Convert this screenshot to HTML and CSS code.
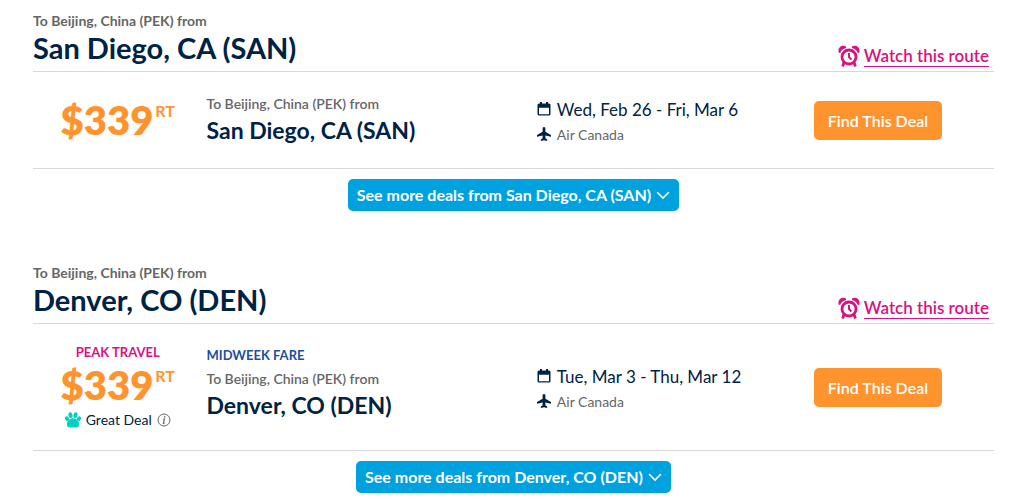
FILE: index.html
```html
<!DOCTYPE html>
<html lang="en">
<head>
    <meta charset="UTF-8">
    <meta name="viewport" content="width=device-width, initial-scale=1.0">
    <title>Deals to Beijing, China (PEK)</title>
    <link rel="stylesheet" href="styles.css">
</head>
<body>
    <!-- Shared icons -->
    <svg class="sprite" aria-hidden="true">
        <symbol id="icon-alarm" viewBox="0 0 22 22">
            <circle cx="11" cy="12" r="7" fill="none" stroke="currentColor" stroke-width="2.8"/>
            <path d="M11 8v4l2.400 2.600" fill="none" stroke="currentColor" stroke-width="2"/>
            <path d="M.8 7.800C-.8 3.200 3.200-.6 8 1.400L8.200 3C5 3.700 3 5.300 2.200 8zM21.200 7.800C22.800 3.200 18.800-.6 14 1.400L13.800 3C17 3.700 19 5.300 19.800 8z" fill="currentColor"/>
            <path d="M6 17.500L4.600 21.500M16 17.500l1.400 4" stroke="currentColor" stroke-width="2.800"/>
        </symbol>
        <symbol id="icon-calendar" viewBox="0 0 14 14">
            <path d="M2 1.500h1V0h2v1.500h4V0h2v1.500h1a1.500 1.500 0 0 1 1.500 1.500v9a1.500 1.500 0 0 1-1.500 1.500H2A1.500 1.500 0 0 1 .5 12V3A1.500 1.500 0 0 1 2 1.500zM2 5.800V12.200h10V5.800z" fill="currentColor" fill-rule="evenodd"/>
        </symbol>
        <symbol id="icon-plane" viewBox="0 0 14 14">
            <path d="M7 0c.9 0 1.400.8 1.400 1.700v3L14 8v1.800L8.400 8.400v2.800L10.200 12.600V14L7 13.200 3.800 14v-1.400l1.800-1.400V8.400L0 9.800V8l5.600-3.300v-3C5.600.8 6.100 0 7 0z" fill="currentColor"/>
        </symbol>
        <symbol id="icon-paw" viewBox="0 0 16 16">
            <g fill="currentColor">
                <ellipse cx="5.500" cy="3.200" rx="2.100" ry="2.900" transform="rotate(-8 5.500 3.200)"/>
                <ellipse cx="10.500" cy="3.200" rx="2.100" ry="2.900" transform="rotate(8 10.500 3.200)"/>
                <ellipse cx="2" cy="6.600" rx="1.900" ry="2.400" transform="rotate(-25 2 6.600)"/>
                <ellipse cx="14" cy="6.600" rx="1.900" ry="2.400" transform="rotate(25 14 6.600)"/>
                <path d="M8 6.200c2.800 0 4.100 1.700 5.200 3 1.500 1.700 1.400 6.100-2 6.400-1.200.1-1.900-.4-3.200-.4s-2 .5-3.200.4c-3.400-.3-3.500-4.700-2-6.400 1.100-1.300 2.400-3 5.200-3z"/>
            </g>
        </symbol>
        <symbol id="icon-info" viewBox="0 0 14 14">
            <circle cx="7" cy="7" r="6" fill="none" stroke="currentColor"/>
            <path d="M6.200 6h1.200l-.9 4.300h1" fill="none" stroke="currentColor" stroke-width="1.200"/>
            <circle cx="7.700" cy="3.900" r=".8" fill="currentColor"/>
        </symbol>
        <symbol id="icon-chevron" viewBox="0 0 14 14">
            <path d="M1.500 4.500L7 10l5.500-5.500" fill="none" stroke="currentColor" stroke-width="1.600" stroke-linecap="round"/>
        </symbol>
    </svg>

    <main class="routes">
        <!-- San Diego -->
        <section class="route">
            <header class="route-header">
                <div>
                    <p class="route-to">To Beijing, China (PEK) from</p>
                    <h2 class="route-city">San Diego, CA (SAN)</h2>
                </div>
                <a class="watch" href="#watch-san">
                    <svg class="watch-icon"><use href="#icon-alarm"/></svg>
                    <span class="watch-text">Watch this route</span>
                </a>
            </header>
            <div class="deal">
                <div class="deal-price">
                    <p class="price">$339<sup class="price-type">RT</sup></p>
                </div>
                <div class="deal-info">
                    <p class="deal-to">To Beijing, China (PEK) from</p>
                    <h3 class="deal-city">San Diego, CA (SAN)</h3>
                </div>
                <div class="deal-trip">
                    <p class="trip-dates"><svg class="trip-icon"><use href="#icon-calendar"/></svg>Wed, Feb 26 - Fri, Mar 6</p>
                    <p class="trip-airline"><svg class="trip-icon"><use href="#icon-plane"/></svg>Air Canada</p>
                </div>
                <div class="deal-action">
                    <button class="btn btn-find" type="button">Find This Deal</button>
                </div>
            </div>
            <div class="more">
                <button class="btn btn-more" type="button">See more deals from San Diego, CA (SAN)<svg class="chevron"><use href="#icon-chevron"/></svg></button>
            </div>
        </section>

        <!-- Denver -->
        <section class="route">
            <header class="route-header">
                <div>
                    <p class="route-to">To Beijing, China (PEK) from</p>
                    <h2 class="route-city">Denver, CO (DEN)</h2>
                </div>
                <a class="watch" href="#watch-den">
                    <svg class="watch-icon"><use href="#icon-alarm"/></svg>
                    <span class="watch-text">Watch this route</span>
                </a>
            </header>
            <div class="deal deal-tall">
                <div class="deal-price">
                    <p class="peak">PEAK TRAVEL</p>
                    <p class="price">$339<sup class="price-type">RT</sup></p>
                    <p class="rating">
                        <svg class="paw"><use href="#icon-paw"/></svg>
                        Great Deal
                        <svg class="info"><use href="#icon-info"/></svg>
                    </p>
                </div>
                <div class="deal-info">
                    <p class="fare">MIDWEEK FARE</p>
                    <p class="deal-to">To Beijing, China (PEK) from</p>
                    <h3 class="deal-city">Denver, CO (DEN)</h3>
                </div>
                <div class="deal-trip">
                    <p class="trip-dates"><svg class="trip-icon"><use href="#icon-calendar"/></svg>Tue, Mar 3 - Thu, Mar 12</p>
                    <p class="trip-airline"><svg class="trip-icon"><use href="#icon-plane"/></svg>Air Canada</p>
                </div>
                <div class="deal-action">
                    <button class="btn btn-find" type="button">Find This Deal</button>
                </div>
            </div>
            <div class="more">
                <button class="btn btn-more" type="button">See more deals from Denver, CO (DEN)<svg class="chevron"><use href="#icon-chevron"/></svg></button>
            </div>
        </section>
    </main>
</body>
</html>
```
FILE: styles.css
```css
:root {
    --navy: #002244;
    --gray: #666;
    --orange: #ff932e;
    --pink: #d9127f;
    --blue: #00a1df;
    --line: #d8d8d8;
}
* {
    box-sizing: border-box;
}
body {
    font-family: Lato, "Open Sans", sans-serif;
    background: #fff;
    color: var(--navy);
    margin: 0;
}
p, h2, h3 {
    margin: 0;
}
.sprite {
    display: none;
}
.routes {
    display: flex;
    flex-direction: column;
    gap: 52px;
    padding: 11px 36px 8px 33px;
}
/* Route heading */
.route-header {
    display: flex;
    justify-content: space-between;
    align-items: flex-end;
    border-bottom: 1px solid var(--line);
    padding-bottom: 4px;
}
.route-to,
.deal-to {
    font-size: 14px;
    line-height: 20px;
    font-weight: 600;
    color: var(--gray);
}
.route-to {
    font-weight: 700;
}
.route-city {
    font-size: 29px;
    line-height: 34px;
    font-weight: 700;
    padding-bottom: 2px;
}
.watch {
    display: flex;
    align-items: center;
    gap: 4px;
    padding-right: 5px;
    color: var(--pink);
    text-decoration: none;
}
.watch-icon {
    width: 22px;
    height: 22px;
}
.watch-text {
    font-size: 17px;
    line-height: 21px;
    font-weight: 600;
    border-bottom: 1px solid var(--pink);
}
/* Deal row */
.deal {
    display: grid;
    grid-template-columns: 52fr 99fr 83fr 54fr;
    align-items: center;
    min-height: 97px;
    border-bottom: 1px solid var(--line);
}
.deal-tall {
    min-height: 127px;
}
.deal-price {
    display: flex;
    flex-direction: column;
    align-items: center;
    padding-right: 4px;
}
.price {
    display: flex;
    font-size: 40px;
    line-height: 46px;
    font-weight: 800;
    color: var(--orange);
}
.price-type {
    font-size: 16px;
    line-height: 28px;
    font-weight: 700;
    padding-left: 2px;
}
.peak,
.fare {
    font-size: 13px;
    line-height: 20px;
    font-weight: 700;
}
.peak {
    color: var(--pink);
}
.fare {
    color: #1d4f9c;
    padding-bottom: 4px;
}
.rating {
    display: flex;
    align-items: center;
    gap: 5px;
    font-size: 14px;
    line-height: 24px;
}
.paw {
    width: 16px;
    height: 16px;
    color: #00d1c1;
}
.info {
    width: 14px;
    height: 14px;
    color: var(--gray);
}
.deal-tall .deal-info {
    padding-bottom: 8px;
}
.deal-city {
    font-size: 23px;
    line-height: 32px;
    font-weight: 700;
}
.deal-trip {
    padding-top: 3px;
}
.trip-dates,
.trip-airline {
    display: flex;
    align-items: center;
    gap: 6px;
    line-height: 25px;
}
.trip-dates {
    font-size: 17px;
}
.trip-airline {
    font-size: 14px;
    color: var(--gray);
}
.trip-icon {
    width: 14px;
    height: 14px;
    color: var(--navy);
}
/* Buttons */
.btn {
    border: none;
    border-radius: 5px;
    color: #fff;
    font-family: inherit;
    cursor: pointer;
}
.btn-find {
    background: var(--orange);
    font-size: 16px;
    line-height: 23px;
    font-weight: 600;
    padding: 8px 14px;
}
.more {
    display: flex;
    justify-content: center;
    padding-top: 10px;
}
.btn-more {
    display: flex;
    align-items: center;
    gap: 5px;
    background: var(--blue);
    font-size: 16px;
    line-height: 20px;
    font-weight: 700;
    padding: 6px 9px;
}
.chevron {
    width: 14px;
    height: 14px;
}
```
